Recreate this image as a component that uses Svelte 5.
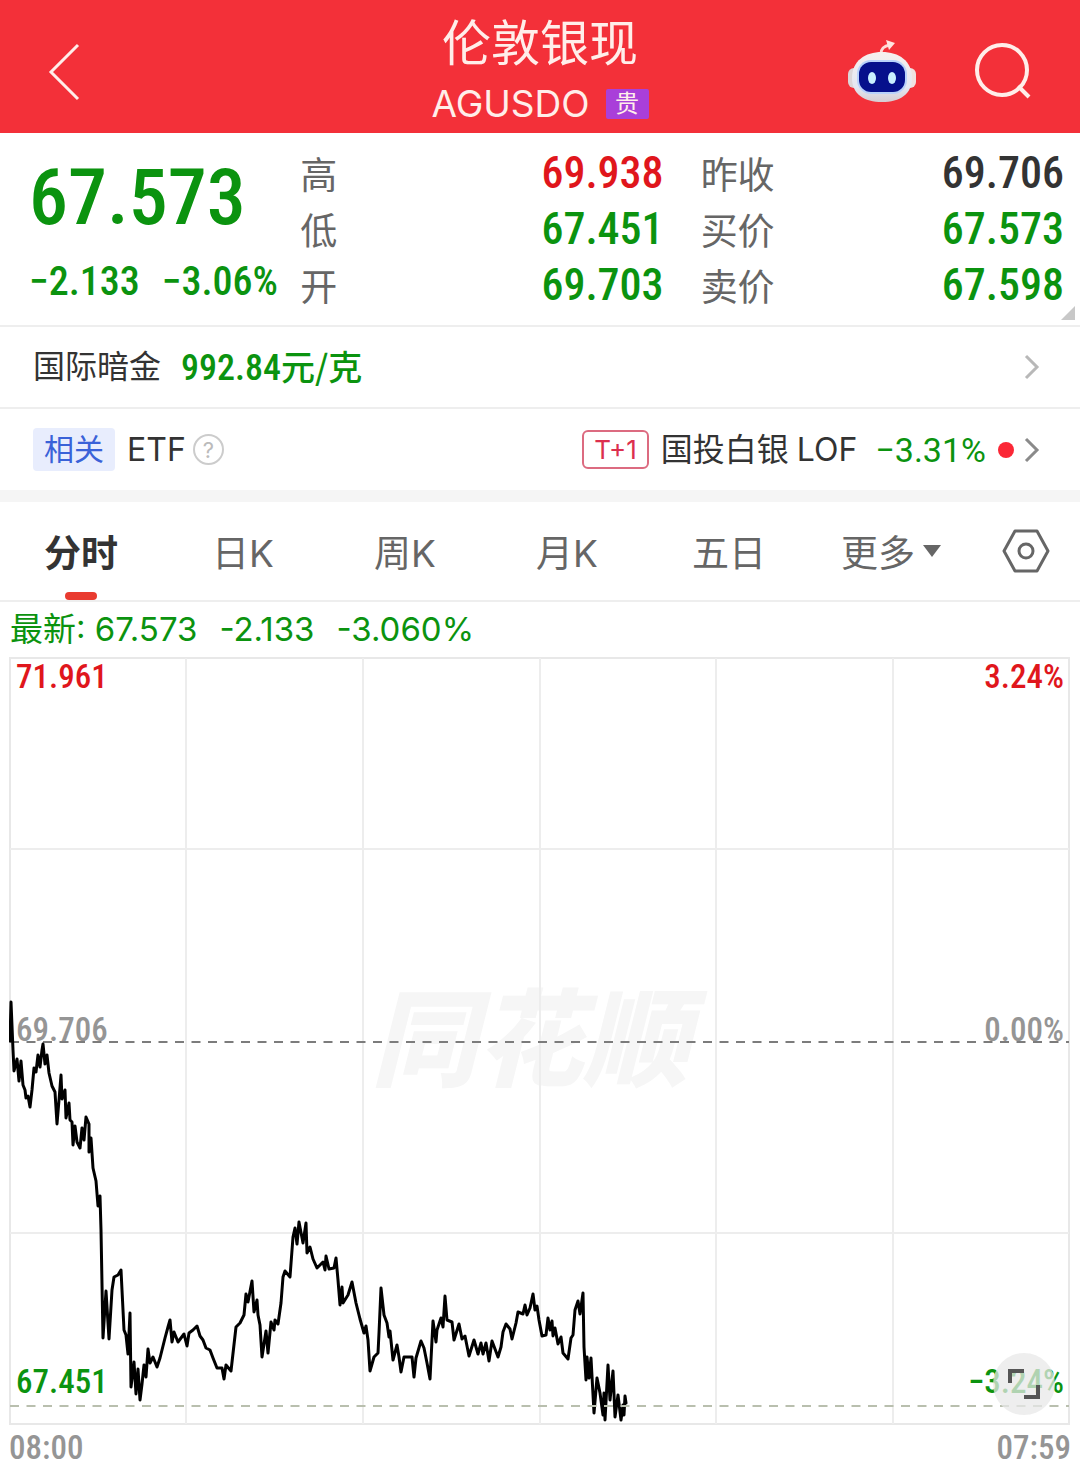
<script lang="ts">
  type Quote = { label: string; value: string; tone: 'up' | 'down' | 'flat' }

  const quotes: Quote[] = [
    { label: '高', value: '69.938', tone: 'up' },
    { label: '昨收', value: '69.706', tone: 'flat' },
    { label: '低', value: '67.451', tone: 'down' },
    { label: '买价', value: '67.573', tone: 'down' },
    { label: '开', value: '69.703', tone: 'down' },
    { label: '卖价', value: '67.598', tone: 'down' },
  ]

  const tabs = ['分时', '日K', '周K', '月K', '五日']
  let active = $state('分时')

  const columns = [186, 363, 540, 716, 893]
  const rows = [849, 1233]

  const priceLine = `
    10,1041 11,1002 13,1050 14,1071 17,1059 19,1081 21,1061 23,1085 25,1090 26,1098 28,1096 30,1107
    32,1090 34,1068 36,1072 38,1055 40,1067 42,1050 43,1044 45,1064 47,1055 49,1073 52,1086 55,1092
    57,1124 59,1100 61,1075 62,1099 65,1090 66,1118 69,1103 70,1120 72,1122 73,1145 75,1126 77,1142
    80,1148 82,1128 84,1140 86,1117 89,1124 89,1152 91,1138 93,1168 96,1181 98,1206 100,1196 101,1230
    103,1338 106,1291 109,1339 112,1290 114,1277 118,1275 121,1270 122,1290 124,1330 126,1335 128,1354
    130,1313 131,1387 134,1362 136,1394 138,1369 140,1400 142,1384 144,1365 146,1377 148,1349 150,1363
    153,1357 157,1367 160,1358 162,1350 165,1338 168,1327 170,1320 172,1342 174,1332 178,1342 184,1334
    187,1346 189,1333 193,1330 197,1326 200,1336 203,1340 206,1348 210,1350 213,1358 217,1368 222,1368
    224,1379 226,1365 231,1371 236,1327 240,1323 244,1315 246,1294 248,1302 252,1281 254,1312 257,1300
    258,1315 260,1325 262,1357 266,1331 268,1353 271,1322 274,1330 275,1320 278,1324 281,1303 283,1277
    285,1271 290,1277 293,1237 295,1228 297,1244 299,1222 303,1243 306,1223 307,1253 310,1247 313,1259
    317,1268 323,1262 325,1270 326,1256 329,1269 334,1268 336,1258 338,1280 340,1305 342,1287 343,1303
    348,1295 352,1282 356,1303 360,1319 364,1333 366,1326 368,1340 370,1371 374,1357 378,1353 379,1333
    381,1288 384,1315 387,1323 389,1337 390,1331 393,1360 397,1345 399,1357 401,1372 404,1357 412,1357
    414,1377 416,1358 421,1341 424,1348 427,1363 430,1379 433,1321 436,1342 437,1330 441,1318 443,1327
    445,1296 447,1320 452,1322 454,1340 459,1324 462,1339 465,1336 469,1356 474,1340 478,1354 481,1343
    483,1354 486,1343 489,1361 492,1341 498,1357 501,1347 503,1332 506,1324 510,1329 512,1339 516,1323
    518,1312 523,1314 525,1305 527,1315 530,1308 533,1294 535,1310 537,1306 539,1320 542,1336 546,1335
    548,1318 550,1330 552,1321 553,1336 555,1328 558,1344 561,1337 563,1353 568,1359 571,1338 573,1335
    575,1310 578,1301 580,1314 583,1293 584,1347 586,1380 587,1357 589,1378 591,1358 594,1413 597,1378
    600,1393 603,1415 604,1393 605,1420 608,1365 610,1400 613,1371 615,1417 618,1395 621,1420 623,1405
    624,1415 625,1396 626,1403`
</script>

<div class="app">
  <header class="topbar">
    <button class="icon-btn back" aria-label="返回">
      <svg width="32" height="58" viewBox="0 0 32 58" fill="none" stroke="#ffeeea" stroke-width="3">
        <path d="M30 2 3 29l27 27" />
      </svg>
    </button>
    <div class="title">
      <h1>伦敦银现</h1>
      <p class="code">AGUSDO <span class="kind">贵</span></p>
    </div>
    <div class="actions">
      <button class="icon-btn" aria-label="智能助手">
        <svg width="68" height="64" viewBox="0 0 68 64">
          <defs>
            <linearGradient id="shell" x1="0" y1="0" x2="0" y2="1">
              <stop offset="0" stop-color="#f7efee" />
              <stop offset="0.7" stop-color="#e4e8f2" />
              <stop offset="1" stop-color="#d5cdd2" />
            </linearGradient>
          </defs>
          <path d="M33 15c0-6 3-8 9-9" fill="none" stroke="#ffd9d6" stroke-width="3" />
          <path d="M38 1l9 3-6 7z" fill="#ffe4e0" />
          <rect x="0" y="29" width="12" height="20" rx="6" fill="#dcd6d8" />
          <rect x="56" y="29" width="12" height="20" rx="6" fill="#efe2e1" />
          <path d="M34 13c17 0 30 9 30 26 0 16-12 24-30 24S4 55 4 39c0-17 13-26 30-26z" fill="url(#shell)" />
          <rect x="9" y="21" width="50" height="34" rx="14" fill="#b9d2fb" />
          <rect x="11" y="23" width="46" height="30" rx="12" fill="#06108c" />
          <ellipse cx="24" cy="39" rx="4" ry="6" fill="#c9efff" />
          <ellipse cx="44" cy="39" rx="4" ry="6" fill="#c9efff" />
        </svg>
      </button>
      <button class="icon-btn" aria-label="搜索">
        <svg width="58" height="58" viewBox="0 0 58 58" fill="none" stroke="#ffeeea" stroke-width="4">
          <circle cx="28" cy="28" r="25" />
          <path d="M44 44l11 11" />
        </svg>
      </button>
    </div>
  </header>

  <section class="quote">
    <div class="last">
      <strong class="price down">67.573</strong>
      <p class="change down"><span>−2.133</span><span>−3.06%</span></p>
    </div>
    <dl class="stats">
      {#each quotes as q (q.label)}
        <div class="stat">
          <dt>{q.label}</dt>
          <dd class={q.tone}>{q.value}</dd>
        </div>
      {/each}
    </dl>
    <span class="corner"></span>
  </section>

  <a class="link-row" href="#gold">
    <span>国际暗金</span>
    <span class="gold down">992.84<span class="unit">元/克</span></span>
    <svg class="arrow" width="16" height="26" viewBox="0 0 16 26" fill="none" stroke="#b8b8b8" stroke-width="3">
      <path d="M2 2l11 11L2 24" />
    </svg>
  </a>

  <div class="link-row related">
    <span class="tag">相关</span>
    <span class="etf">ETF</span>
    <button class="icon-btn help" aria-label="说明">?</button>
    <a class="fund" href="#fund">
      <span class="settle">T+1</span>
      <span class="fund-name"><span>国投白银</span><span>LOF</span></span>
      <span class="fund-change down">−3.31%</span>
      <span class="dot"></span>
      <svg width="16" height="26" viewBox="0 0 16 26" fill="none" stroke="#8a8a8a" stroke-width="3">
        <path d="M2 2l11 11L2 24" />
      </svg>
    </a>
  </div>

  <nav class="tabs">
    {#each tabs as tab (tab)}
      <button class="tab" class:active={active === tab} onclick={() => (active = tab)}>{tab}</button>
    {/each}
    <button class="tab more">更多<span class="caret"></span></button>
    <button class="tab" aria-label="图表设置">
      <svg width="48" height="44" viewBox="0 0 48 44" fill="none" stroke="#666" stroke-width="3" stroke-linejoin="round">
        <path d="M13 2h22l11 20-11 20H13L2 22z" />
        <circle cx="24" cy="22" r="7" />
      </svg>
    </button>
  </nav>

  <p class="latest down">
    <span>最新: 67.573</span><span>-2.133</span><span>-3.060%</span>
  </p>

  <figure class="chart">
    <div class="plot">
      <span class="watermark" aria-hidden="true">同花顺</span>
      <svg class="lines" viewBox="9 657 1062 769" fill="none">
        <rect x="10" y="658" width="1059" height="766" stroke="#e8e8e8" stroke-width="2" />
        {#each columns as x}
          <path d="M{x} 658V1424" stroke="#ededed" stroke-width="2" />
        {/each}
        {#each rows as y}
          <path d="M10 {y}H1069" stroke="#ededed" stroke-width="2" />
        {/each}
        <path d="M10 1042H1069" stroke="#7c7c7c" stroke-width="2" stroke-dasharray="9 7.5" />
        <polyline points={priceLine} stroke="#000" stroke-width="3" stroke-linejoin="round" stroke-linecap="round" />
        <path d="M10 1406H1069" stroke="#b9bfae" stroke-width="2" stroke-dasharray="9 7.5" />
      </svg>
      <span class="axis top left up">71.961</span>
      <span class="axis top right up">3.24%</span>
      <span class="axis middle left">69.706</span>
      <span class="axis middle right">0.00%</span>
      <span class="axis bottom left down">67.451</span>
      <span class="axis bottom right down">−3.24%</span>
      <button class="expand" aria-label="全屏">
        <svg width="34" height="34" viewBox="0 0 34 34" fill="none" stroke="#555" stroke-width="4">
          <path d="M3 16V4h14M31 18v12H17" />
        </svg>
      </button>
    </div>
    <figcaption class="times"><span>08:00</span><span>07:59</span></figcaption>
  </figure>
</div>

<style>
  :global(body) { margin: 0; background: #fff; }

  .app {
    --num: 'Roboto Condensed', 'Liberation Sans Narrow', Roboto, 'Noto Sans CJK SC', sans-serif;
    font-family: Inter, 'Noto Sans CJK SC', sans-serif;
    font-size: 32px;
    color: #333;
    background: #fff;
  }
  h1, p, dl, dd, figure { margin: 0; }
  button { font: inherit; color: inherit; background: none; border: 0; padding: 0; cursor: pointer; }
  a { color: inherit; text-decoration: none; }
  svg { display: block; flex-shrink: 0; }

  .up { color: #e0161c; }
  .down { color: #0b930f; }
  .flat { color: #333; }

  .topbar {
    display: grid;
    grid-template-columns: 1fr auto 1fr;
    align-items: center;
    height: 133px;
    padding: 0 48px;
    box-sizing: border-box;
    background: #f33039;
    color: #ffeeea;
  }
  .back { justify-self: start; padding-top: 10px; }
  .title { padding-top: 10px; text-align: center; }
  h1 { font-size: 49px; line-height: 64px; font-weight: 400; }
  .code {
    display: flex;
    align-items: center;
    justify-content: center;
    gap: 16px;
    font-size: 37px;
    line-height: 56px;
  }
  .kind {
    width: 43px;
    border-radius: 2px;
    background: #a93fd9;
    font-size: 24px;
    line-height: 30px;
  }
  .actions { display: flex; align-items: center; justify-content: flex-end; gap: 58px; padding-top: 8px; }

  .quote {
    position: relative;
    display: grid;
    grid-template-columns: 271fr 763fr;
    padding: 12px 16px 12px 29px;
    border-bottom: 2px solid #eee;
  }
  .last { display: flex; flex-direction: column; font-family: var(--num); white-space: nowrap; }
  .price { font-size: 78px; line-height: 106px; font-weight: 500; }
  .change { display: flex; gap: 22px; font-size: 40px; line-height: 62px; font-weight: 500; }
  .stats { display: grid; grid-template-columns: 1fr 1fr; column-gap: 37px; }
  .stat { display: flex; align-items: center; justify-content: space-between; height: 56px; }
  dt { padding-top: 6px; font-size: 37px; line-height: 50px; color: #666; }
  dd { font-family: var(--num); font-size: 44px; line-height: 56px; font-weight: 500; }
  .corner {
    position: absolute;
    right: 5px;
    bottom: 5px;
    border-left: 14px solid transparent;
    border-bottom: 14px solid #c8c8c8;
  }

  .link-row {
    display: flex;
    align-items: center;
    height: 80px;
    padding: 0 40px 0 33px;
    border-bottom: 2px solid #eee;
    line-height: 44px;
  }
  .gold { margin-left: 20px; font-family: var(--num); font-size: 36px; font-weight: 500; }
  .unit { font-family: 'Noto Sans CJK SC', sans-serif; font-size: 34px; }
  .arrow { margin-left: auto; }
  .related { height: 81px; border-bottom: 12px solid #f5f5f5; }
  .tag {
    padding: 0 11px;
    border-radius: 4px;
    background: #e8edfd;
    color: #3a62d8;
    font-size: 30px;
    line-height: 43px;
  }
  .etf { margin-left: 12px; }
  .help {
    width: 31px;
    height: 31px;
    margin-left: 7px;
    border: 2px solid #ccc;
    border-radius: 50%;
    box-sizing: border-box;
    color: #bbb;
    font-size: 22px;
    line-height: 26px;
  }
  .fund { display: flex; align-items: center; margin-left: auto; }
  .settle {
    padding: 0 10px;
    border: 2px solid #dc6b80;
    border-radius: 6px;
    color: #dc2f4e;
    font-size: 26px;
    line-height: 35px;
  }
  .fund-name { display: flex; align-items: baseline; gap: 8px; margin-left: 12px; }
  .fund-change { margin-left: 18px; font-family: Roboto, sans-serif; font-size: 34px; }
  .dot { width: 16px; height: 16px; margin: 0 10px 0 12px; border-radius: 50%; background: #fb2736; }

  .tabs {
    display: grid;
    grid-template-columns: repeat(6, 3fr) 2fr;
    height: 98px;
    border-bottom: 2px solid #eee;
  }
  .tab {
    position: relative;
    display: flex;
    align-items: center;
    justify-content: center;
    font-size: 37px;
    color: #666;
  }
  .tab.active { color: #333; font-weight: 700; }
  .tab.active::after {
    content: '';
    position: absolute;
    bottom: 0;
    left: calc(50% - 16px);
    width: 32px;
    height: 8px;
    border-radius: 4px;
    background: #e93b30;
  }
  .more { gap: 8px; }
  .caret { border: 9px solid transparent; border-top: 12px solid #666; border-bottom: 0; }

  .latest {
    display: flex;
    gap: 22px;
    padding: 0 10px;
    font-size: 33px;
    line-height: 55px;
  }

  .chart { padding: 0 9px; }
  .plot { position: relative; }
  .lines { position: relative; width: 100%; height: auto; }
  .watermark {
    position: absolute;
    inset: 0;
    display: flex;
    align-items: center;
    justify-content: center;
    padding: 0 20px 20px 0;
    color: #f6f6f6;
    font-size: 106px;
    font-weight: 900;
    font-style: italic;
  }
  .axis {
    position: absolute;
    font-family: var(--num);
    font-size: 33px;
    line-height: 40px;
    font-weight: 500;
  }
  .left { left: 7px; }
  .right { right: 7px; }
  .top { top: 0; }
  .middle { bottom: calc(50% - 8px); color: #959595; }
  .bottom { bottom: 24px; }
  .expand {
    position: absolute;
    right: 16px;
    bottom: 11px;
    display: flex;
    align-items: center;
    justify-content: center;
    width: 62px;
    height: 62px;
    border-radius: 50%;
    background: rgba(232, 232, 232, 0.75);
  }
  .times {
    display: flex;
    justify-content: space-between;
    font-family: var(--num);
    font-size: 33px;
    line-height: 44px;
    font-weight: 500;
    color: #959595;
  }
</style>
